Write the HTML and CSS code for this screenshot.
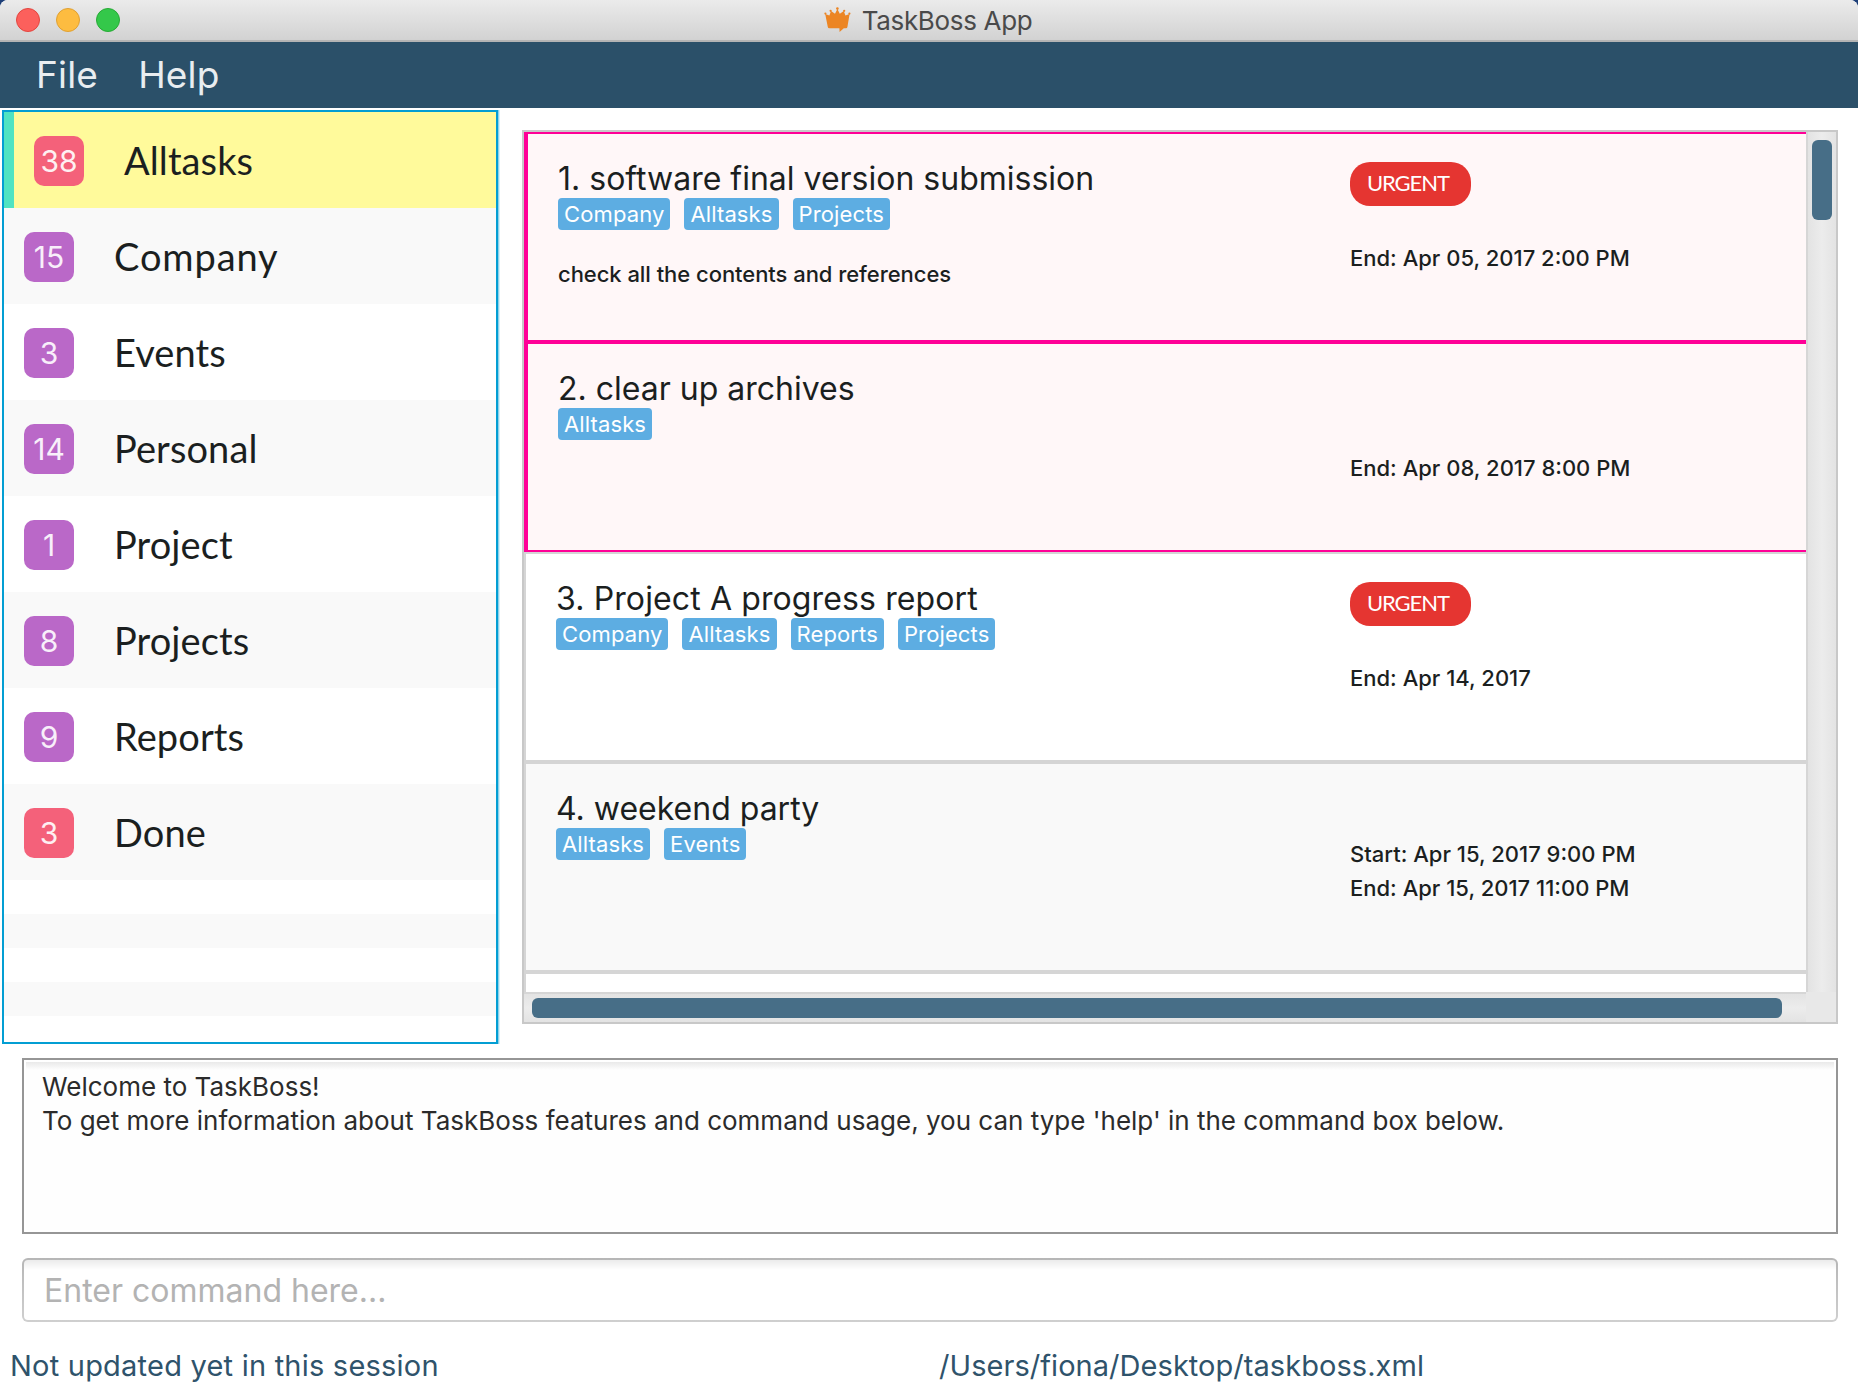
FILE: index.html
```html
<!DOCTYPE html>
<html lang="en">
<head>
<meta charset="utf-8">
<title>TaskBoss App</title>
<link rel="stylesheet" href="styles.css">
</head>
<body>
<div class="window">
  <header class="titlebar">
    <div class="lights"><span class="light close"></span><span class="light minimize"></span><span class="light maximize"></span></div>
    <div class="title">
      <svg class="crown" width="28" height="26" viewBox="0 0 28 26" aria-hidden="true">
        <path fill="#ec8523" d="M1.2 8 L5.4 9.4 L7 5 L11 7.8 L13.4 3 L15.8 7.8 L19.8 5 L21.4 9.4 L25.6 8 L23.4 21 Q23.2 22.2 22 22.2 L19.8 22.2 L15.6 26 L15.4 22.2 L5.4 22.2 Q4 22.2 3.8 21 Z"/>
        <g fill="#ec8523"><circle cx="1.4" cy="7.6" r="1.1"/><circle cx="6.6" cy="4.8" r="1.1"/><circle cx="13.4" cy="2.6" r="1.3"/><circle cx="20.2" cy="4.8" r="1.1"/><circle cx="25.4" cy="7.6" r="1.1"/></g>
      </svg>
      <span>TaskBoss App</span>
    </div>
  </header>
  <nav class="menubar"><span>File</span><span>Help</span></nav>

  <main class="content">
    <aside class="categories">
      <div class="category selected"><span class="count red">38</span><span class="name">Alltasks</span></div>
      <div class="category"><span class="count">15</span><span class="name wide">Company</span></div>
      <div class="category"><span class="count">3</span><span class="name">Events</span></div>
      <div class="category"><span class="count">14</span><span class="name">Personal</span></div>
      <div class="category"><span class="count">1</span><span class="name">Project</span></div>
      <div class="category"><span class="count">8</span><span class="name">Projects</span></div>
      <div class="category"><span class="count">9</span><span class="name">Reports</span></div>
      <div class="category"><span class="count red">3</span><span class="name">Done</span></div>
      <div class="filler"></div><div class="filler"></div><div class="filler"></div><div class="filler"></div>
    </aside>

    <section class="tasks">
      <div class="list">
        <article class="task overdue">
          <div class="info">
            <h2>1. software final version submission</h2>
            <div class="tags"><span>Company</span><span>Alltasks</span><span>Projects</span></div>
            <p class="note">check all the contents and references</p>
          </div>
          <div class="when"><span class="urgent">URGENT</span><div class="dates"><div>End: Apr 05, 2017 2:00 PM</div></div></div>
        </article>
        <article class="task overdue">
          <div class="info">
            <h2>2. clear up archives</h2>
            <div class="tags"><span>Alltasks</span></div>
          </div>
          <div class="when"><div class="dates"><div>End: Apr 08, 2017 8:00 PM</div></div></div>
        </article>
        <article class="task">
          <div class="info">
            <h2 class="wide">3. Project A progress report</h2>
            <div class="tags"><span>Company</span><span>Alltasks</span><span>Reports</span><span>Projects</span></div>
          </div>
          <div class="when"><span class="urgent">URGENT</span><div class="dates"><div>End: Apr 14, 2017</div></div></div>
        </article>
        <article class="task shaded">
          <div class="info">
            <h2>4. weekend party</h2>
            <div class="tags"><span>Alltasks</span><span>Events</span></div>
          </div>
          <div class="when"><div class="dates"><div>Start: Apr 15, 2017 9:00 PM</div><div>End: Apr 15, 2017 11:00 PM</div></div></div>
        </article>
        <article class="task"></article>
      </div>
      <div class="vbar"><div class="thumb"></div></div>
      <div class="hbar"><div class="thumb"></div></div>
      <div class="corner"></div>
    </section>
  </main>

  <section class="console">
    <div>Welcome to TaskBoss!</div>
    <div>To get more information about TaskBoss features and command usage, you can type 'help' in the command box below.</div>
  </section>
  <input class="command" type="text" placeholder="Enter command here...">
  <footer class="status"><span class="sync">Not updated yet in this session</span><span class="path">/Users/fiona/Desktop/taskboss.xml</span></footer>
</div>
</body>
</html>
```
FILE: styles.css
```css
* { box-sizing: border-box; }

body {
  margin: 0;
  background: #1d3f78;
  font-family: Inter, "Liberation Sans", sans-serif;
  color: #1b1f1f;
}

.window {
  display: flex;
  flex-direction: column;
  width: 1858px;
  height: 1392px;
  background: #fff;
  border-radius: 8px 8px 0 0;
  overflow: hidden;
}

/* Title bar */
.titlebar {
  display: grid;
  grid-template-columns: 1fr auto 1fr;
  align-items: center;
  height: 42px;
  flex: none;
  padding: 0 16px;
  background: linear-gradient(#ebebeb, #d2d2d2);
  border-bottom: 2px solid #b4b4b4;
}
.lights { display: flex; gap: 16px; }
.light {
  width: 24px;
  height: 24px;
  border-radius: 50%;
  border: 1px solid #e2463f;
  background: #fc605c;
}
.minimize { background: #fdbc40; border-color: #dfa033; }
.maximize { background: #34c84a; border-color: #27aa35; }
.title {
  display: flex;
  align-items: center;
  gap: 10px;
  height: 40px;
  padding-right: 2px;
  font-size: 26px;
  line-height: 38px;
  letter-spacing: -0.33px;
  color: #4a4a4a;
}
.title span { padding-top: 2px; }
.crown { display: block; margin-top: -3px; }

/* Menu bar */
.menubar {
  display: flex;
  align-items: center;
  gap: 40px;
  height: 66px;
  flex: none;
  padding: 0 0 2px 36px;
  background: #2b5069;
  color: #e9edf0;
  font-size: 37px;
  letter-spacing: 0.2px;
}

.content {
  display: flex;
  align-items: flex-start;
  gap: 24px;
  height: 948px;
  flex: none;
  padding: 2px 20px 0 2px;
}

/* Category list */
.categories {
  width: 496px;
  height: 934px;
  flex: none;
  overflow: hidden;
  border: 2px solid #039ed3;
  box-shadow: 1px 0 0 #8fd2ea, 2px 0 0 #d6eff8;
}
.category {
  display: flex;
  align-items: flex-start;
  gap: 40px;
  height: 96px;
  padding: 24px 0 0 20px;
}
.category:nth-child(even) { background: #f9f9f9; }
.category.selected {
  border-left: 10px solid #50e3c2;
  background: #fffa9b;
}
.count {
  width: 50px;
  height: 50px;
  border-radius: 10px;
  background: #ba68c8;
  color: #f8effa;
  font-size: 30px;
  line-height: 50px;
  text-align: center;
}
.count.red { background: #f4617a; color: #fef0f2; }
.name {
  font-family: Lato, "Liberation Sans", sans-serif;
  font-size: 38px;
  line-height: 48px;
  letter-spacing: 0.1px;
}
.name.wide { letter-spacing: 0.9px; }
.filler { height: 34px; }
.filler:nth-child(even) { background: #f9f9f9; }

/* Task list */
.tasks {
  display: grid;
  grid-template: 860px 30px / 1282px 30px;
  margin-top: 20px;
  border: 2px solid #c8c8c8;
}
.list { overflow: hidden; }
.task {
  display: grid;
  grid-template-columns: 1fr 456px;
  height: 210px;
  border: 2px solid #d5d5d5;
  border-right: 0;
  background: #fff;
}
.task.shaded { background: #f9f9f9; }
.task.overdue {
  border-color: #ff0097;
  border-left-width: 4px;
  background: #fff7f8;
}
.info { padding: 25px 0 0 30px; }
h2 {
  margin: 0;
  font-size: 32px;
  font-weight: 400;
  line-height: 39px;
  letter-spacing: 0;
  white-space: nowrap;
}
h2.wide { letter-spacing: 0.12px; }
.tags { display: flex; gap: 14px; }
.tags span {
  height: 32px;
  padding: 0 6px;
  border-radius: 4px;
  background: #5dade2;
  color: #fff;
  font-size: 22px;
  line-height: 32px;
  letter-spacing: 0.12px;
}
.note {
  margin: 30px 0 0;
  font-size: 22px;
  font-weight: 450;
  line-height: 28px;
  letter-spacing: -0.05px;
}
.when {
  display: flex;
  flex-direction: column;
  align-items: flex-start;
  padding: 28px 0 65px;
}
.urgent {
  width: 121px;
  height: 44px;
  padding-left: 17px;
  border-radius: 20px;
  background: #e53531;
  color: #fff;
  font: 400 22px/41px Lato, "Liberation Sans", sans-serif;
  letter-spacing: -1.1px;
}
.dates {
  margin-top: auto;
  font-size: 22px;
  font-weight: 450;
  line-height: 34px;
  letter-spacing: 0;
}

/* Scroll bars */
.vbar {
  padding: 8px 4px 0;
  border-left: 2px solid #d6d6d6;
  background: linear-gradient(90deg, #e3e3e3, #ececec 50%, #e3e3e3);
}
.vbar .thumb { width: 20px; height: 80px; }
.hbar {
  padding: 4px 0 0 8px;
  border-top: 2px solid #d6d6d6;
  background: linear-gradient(#e3e3e3, #ececec 50%, #e3e3e3);
}
.hbar .thumb { width: 1250px; height: 20px; }
.thumb { border-radius: 6px; background: #476e87; }
.corner { background: #e8e8e8; }

/* Result display */
.console {
  width: 1816px;
  height: 176px;
  flex: none;
  margin: 2px 0 0 22px;
  padding: 10px 18px;
  border: 2px solid #969696;
  outline: 2px solid #fff;
  outline-offset: -4px;
  background: linear-gradient(#fff 2px, #e9e9e9 2px, #fefefe 10px);
  color: #2b2b2b;
  font-size: 26px;
  line-height: 34px;
}

/* Command box */
.command {
  width: 1816px;
  height: 64px;
  flex: none;
  margin: 24px 0 0 22px;
  padding: 0 20px;
  border: 2px solid transparent;
  border-radius: 6px;
  background:
    linear-gradient(#ebebeb, #fff 10px) padding-box,
    linear-gradient(#b6b6b6, #cfcfcf) border-box;
  font: 32px/60px Inter, "Liberation Sans", sans-serif;
  outline: 0;
}
.command::placeholder { color: #b3b3b3; opacity: 1; }

/* Status bar */
.status {
  display: grid;
  grid-template-columns: 1fr 1fr;
  padding-top: 24px;
  color: #2f536b;
  font-size: 29px;
  line-height: 40px;
}
.status span { padding-left: 10px; }
.sync { letter-spacing: 0.22px; }
.path { letter-spacing: 0.05px; }
```
